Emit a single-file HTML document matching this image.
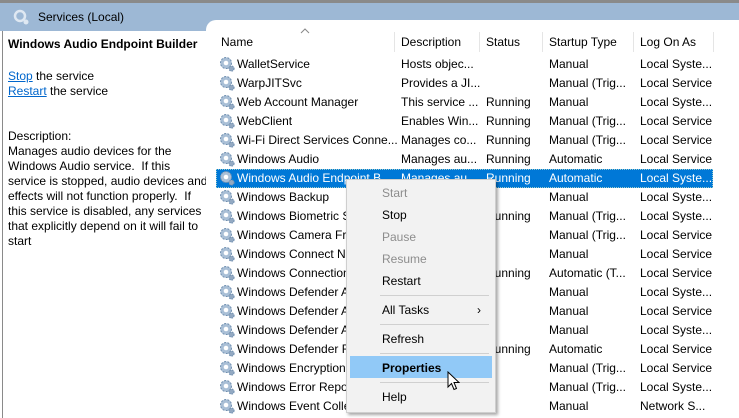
<!DOCTYPE html>
<html><head><meta charset="utf-8"><style>
*{margin:0;padding:0;box-sizing:border-box}
body{width:739px;height:418px;overflow:hidden;background:#fff;font-family:"Liberation Sans",sans-serif;font-size:12px;color:#000;position:relative}
.top{position:absolute;left:0;top:0;width:739px;height:3px;background:#8a8a8a}
.hdr{position:absolute;left:0;top:3px;width:739px;height:28px;background:#9db8d5}
.title{position:absolute;left:38px;top:10px;font-size:12px}
.left{position:absolute;left:2px;top:31px;width:206px;height:387px;background:#fff;border-left:1px solid #8a8a8a}
.right{position:absolute;left:206px;top:20px;width:533px;height:398px;background:#fff;border-top-left-radius:10px}
.t{position:absolute;white-space:nowrap}
a{color:#0066cc;text-decoration:underline}
.sep{position:absolute;top:32px;width:1px;height:20px;background:#e5e5e5}
.row{position:absolute;left:216px;width:497px;height:19px}
.sel{background:#0078d7;color:#fff}
.gear{position:absolute;left:219px;width:16px;height:16px}
.menu{position:absolute;left:346px;top:179px;width:150px;height:234px;background:#f2f2f2;border:1px solid #cfcfcf;box-shadow:2px 2px 3px rgba(0,0,0,.35)}
.mi{position:absolute;left:35px}
.dis{color:#8d8d8d}
.msep{position:absolute;left:33px;width:109px;height:1px;background:#d0d0d0}
</style></head><body>
<div class="top"></div>
<div class="hdr"></div>
<svg style="position:absolute;left:13px;top:9px" width="18" height="18" viewBox="0 0 18 18"><circle cx="7" cy="7" r="5" fill="none" stroke="#dfe8f2" stroke-width="2.5"/><circle cx="13" cy="13" r="2.5" fill="#dfe8f2"/></svg>
<div class="t title">Services (Local)</div>
<div class="left">
<div class="t" style="left:5px;top:6px;font-weight:bold">Windows Audio Endpoint Builder</div>
<div class="t" style="left:5px;top:38px"><a>Stop</a> the service</div>
<div class="t" style="left:5px;top:53px"><a>Restart</a> the service</div>
<div class="t" style="left:5px;top:98px;line-height:15px">Description:<br>Manages audio devices for the<br>Windows Audio service.&nbsp; If this<br>service is stopped, audio devices and<br>effects will not function properly.&nbsp; If<br>this service is disabled, any services<br>that explicitly depend on it will fail to<br>start</div>
</div>
<div class="right"></div>
<svg style="position:absolute;left:300px;top:28px" width="10" height="6"><path d="M1 5 L5 1 L9 5" fill="none" stroke="#888" stroke-width="1"/></svg>
<div class="t" style="left:221px;top:35px">Name</div>
<div class="sep" style="left:394px"></div>
<div class="t" style="left:401px;top:35px">Description</div>
<div class="sep" style="left:479px"></div>
<div class="t" style="left:486px;top:35px">Status</div>
<div class="sep" style="left:542px"></div>
<div class="t" style="left:549px;top:35px">Startup Type</div>
<div class="sep" style="left:633px"></div>
<div class="t" style="left:640px;top:35px">Log On As</div>
<div class="sep" style="left:713px"></div>
<div id="rows"></div>
<script>
var N=["WalletService","WarpJITSvc","Web Account Manager","WebClient","Wi-Fi Direct Services Conne...","Windows Audio","Windows Audio Endpoint B...","Windows Backup","Windows Biometric S...","Windows Camera Fra...","Windows Connect N...","Windows Connection...","Windows Defender A...","Windows Defender A...","Windows Defender A...","Windows Defender F...","Windows Encryption...","Windows Error Repor...","Windows Event Colle..."];
var D=["Hosts objec...","Provides a JI...","This service ...","Enables Win...","Manages co...","Manages au...","Manages au..."];
var S=["","","Running","Running","Running","Running","Running","","Running","","","Running","","","","Running","","",""];
var U=["Manual","Manual (Trig...","Manual","Manual (Trig...","Manual (Trig...","Automatic","Automatic","Manual","Manual (Trig...","Manual (Trig...","Manual","Automatic (T...","Manual","Manual","Manual","Automatic","Manual (Trig...","Manual (Trig...","Manual"];
var L=["Local Syste...","Local Service","Local Syste...","Local Service","Local Service","Local Service","Local Syste...","Local Syste...","Local Syste...","Local Service","Local Service","Local Service","Local Syste...","Local Service","Local Syste...","Local Service","Local Service","Local Syste...","Network S..."];
var h="";
for(var i=0;i<N.length;i++){var y=54+i*19;
if(i==6)h+='<div class="row sel" style="top:'+(y+1)+'px;border:1px dotted #9cc"></div>';
var c=i==6?'color:#fff;':'';
h+='<svg class="gear" style="top:'+(y+2)+'px" viewBox="0 0 16 16"><circle cx="7" cy="7" r="5.5" fill="#a9bfd6" stroke="#6f8fb0" stroke-width="1" stroke-dasharray="2 1.4"/><circle cx="7" cy="7" r="2.3" fill="#fff"/><circle cx="12.5" cy="12.5" r="2.6" fill="#93a9c2" stroke="#6f8fb0" stroke-dasharray="1.5 1"/></svg>';
h+='<div class="t" style="'+c+'left:237px;top:'+(y+3)+'px">'+N[i]+'</div>';
if(D[i])h+='<div class="t" style="'+c+'left:401px;top:'+(y+3)+'px">'+D[i]+'</div>';
if(S[i])h+='<div class="t" style="'+c+'left:486px;top:'+(y+3)+'px">'+S[i]+'</div>';
h+='<div class="t" style="'+c+'left:549px;top:'+(y+3)+'px">'+U[i]+'</div>';
h+='<div class="t" style="'+c+'left:640px;top:'+(y+3)+'px">'+L[i]+'</div>';}
document.getElementById("rows").innerHTML=h;
</script>
<div class="menu">
<div class="t mi dis" style="top:6px">Start</div>
<div class="t mi" style="top:28px">Stop</div>
<div class="t mi dis" style="top:50px">Pause</div>
<div class="t mi dis" style="top:72px">Resume</div>
<div class="t mi" style="top:94px">Restart</div>
<div class="msep" style="top:115px"></div>
<div class="t mi" style="top:123px">All Tasks</div>
<div class="t" style="left:130px;top:123px">&#8250;</div>
<div class="msep" style="top:144px"></div>
<div class="t mi" style="top:152px">Refresh</div>
<div class="msep" style="top:173px"></div>
<div style="position:absolute;left:3px;top:176px;width:142px;height:22px;background:#91c9f7"></div>
<div class="t mi" style="top:181px;font-weight:bold">Properties</div>
<div class="msep" style="top:202px"></div>
<div class="t mi" style="top:210px">Help</div>
</div>
<svg style="position:absolute;left:447px;top:371px" width="13" height="20" viewBox="0 0 13 20"><path d="M1 1 L1 16 L4.5 12.5 L7 18.5 L9.5 17.5 L7 11.5 L12 11.5 Z" fill="#fff" stroke="#000" stroke-width="1"/></svg>
</body></html>
